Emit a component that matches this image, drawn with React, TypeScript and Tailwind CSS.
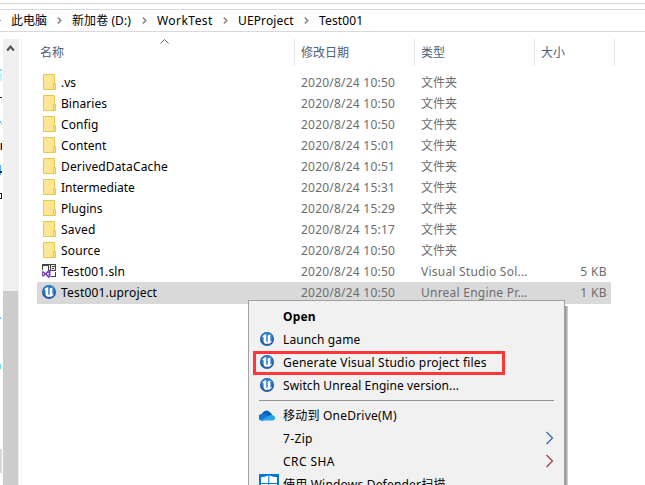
import React from "react";

const UnrealIcon = ({ className = "" }: { className?: string }) => (
  <svg width="14" height="14" viewBox="0 0 14 14" className={`${className} block shrink-0`}>
    <circle cx="7" cy="7" r="7" fill="#245ca6" />
    <circle cx="7" cy="5.800" r="5.700" fill="#2f7fca" />
    <path d="M2 5C2.800 3.600 4.200 2.600 6.200 2.300v6.500c0 1.200.9 1.300 1.500.8V4.300L7 3.700C8.600 3.400 9.600 3 10.800 2.300L10.300 3.500V8.700c0 .9.8.9 1.700.1-.5 1.800-2 2.800-3.300 3.100L7.900 11.200l-1 .9C5 12 3.500 10.900 3.600 9.300V5.300C3.400 4.500 2.700 4.500 2 5z" fill="#fff" />
  </svg>
);

const FolderIcon = () => (
  <svg width="13" height="16" viewBox="0 0 13 16" className="-mt-px ml-px block shrink-0">
    <path d="M.5.5h11v15H.5z" fill="#ffe694" stroke="#e9c84c" />
    <path d="M10.500 15.500v-6h2v6z" fill="#ffe18a" stroke="#e9c84c" />
  </svg>
);

const SolutionIcon = () => (
  <svg width="14" height="14" viewBox="0 0 14 14" className="-mt-px block shrink-0">
    <path d="M0 0h6v2H0zM0 2h1v4H0zM9 12h5v1H9zM13 8h1v5h-1z" fill="#424242" shapeRendering="crispEdges" />
    <path d="M6 0h8v7H6z" fill="#424242" shapeRendering="crispEdges" />
    <path d="M7 1h1v5H7zM9 1h1v5H9zM10 1h3v1h-3zM10 3h3v1h-3zM10 5h3v1h-3zM12 3h1v3h-1z" fill="#e8e8e8" shapeRendering="crispEdges" />
    <path d="M0 7.500l1-.5 2.500 2L6.500 5.800 8.500 6.500v6.500l-2 1L3.500 11 1 12.700 0 12.200zM1.200 9v2l1.200-1zM6.600 8.500L4.800 10l1.800 1.500z" fill="#7b45b5" fillRule="evenodd" />
  </svg>
);

const CloudIcon = () => (
  <svg width="16" height="11" viewBox="0 0 16 11" className="-mt-px block shrink-0">
    <path d="M3 10.500A3.200 3.200 0 0 1 2.800 4 4.700 4.700 0 0 1 11 2.300 4 4 0 0 1 13 5l-9 5.500z" fill="#0863b8" />
    <path d="M3.200 4.100C4.800 3.300 6 4 7 4.700l5 3.300-8 2.500H3A3.200 3.200 0 0 1 3.200 4.100z" fill="#1478d0" />
    <path d="M2 10l8-4.300c3-1.500 6-.1 6 2.300 0 1.500-1.200 2.500-2.500 2.500H3.300z" fill="#28a4ea" />
  </svg>
);

const DefenderIcon = () => (
  <svg width="20" height="20" viewBox="0 0 20 20" className="-mt-px block shrink-0">
    <path d="M0 0h20v20H0z" fill="#0078d7" />
    <path d="M2 3.200Q6 3 9.300 1.500V9H2zM10.300 1.500Q14 3 18 3.200V9h-7.700zM2 10h7.300v9H5Q2 16 2 10zM10.300 10H18q0 6-3 9h-4.700z" fill="#fff" />
  </svg>
);

const Crumb = ({ text, place }: { text: string; place: string }) => (
  <span className={`${place} ml-[10px] whitespace-nowrap`}>{text}</span>
);

const CrumbArrow = () => (
  <svg width="5" height="7" viewBox="0 0 5 7" className="block shrink-0">
    <path d="M.8.500l3 3-3 3" fill="none" stroke="#858585" strokeWidth="1.500" />
  </svg>
);

type Row = { name: string; date: string; type: string; size?: string; track: string; icon: React.ReactNode };
const folder = (name: string, time: string, track: string): Row => ({
  name, date: `2020/8/24 ${time}`, type: "文件夹", track, icon: <FolderIcon />,
});
const rows: Row[] = [
  folder(".vs", "10:50", ""),
  folder("Binaries", "10:50", "tracking-[0.05px]"),
  folder("Config", "10:50", "tracking-[0.1px]"),
  folder("Content", "15:01", "tracking-[0.05px]"),
  folder("DerivedDataCache", "10:51", "tracking-[0.14px]"),
  folder("Intermediate", "15:31", ""),
  folder("Plugins", "15:29", ""),
  folder("Saved", "15:17", "tracking-[0.2px]"),
  folder("Source", "10:50", "tracking-[0.15px]"),
  { name: "Test001.sln", date: "2020/8/24 10:50", type: "Visual Studio Sol...", size: "5 KB", track: "tracking-[0.12px]", icon: <SolutionIcon /> },
  { name: "Test001.uproject", date: "2020/8/24 10:50", type: "Unreal Engine Pr...", size: "1 KB", track: "tracking-[0.18px]", icon: <UnrealIcon className="-mt-0.5" /> },
];

const MenuRow = ({ icon, text, track = "", bold, arrow }: { icon?: React.ReactNode; text: string; track?: string; bold?: boolean; arrow?: string }) => (
  <div className="flex h-[23px] shrink-0 items-center pr-[10px]">
    <div className="flex w-[34px] shrink-0 items-center pl-[10px]">{icon}</div>
    <span className={`grow whitespace-nowrap ${track} ${bold ? "font-bold" : ""}`}>{text}</span>
    {arrow && (
      <svg width="9" height="14" viewBox="0 0 9 14" className="-mt-0.5 block">
        <path d="M1.500 1l6 6-6 6" fill="none" stroke={arrow} strokeWidth="1.200" />
      </svg>
    )}
  </div>
);

export default function App() {
  return (
    <div className="relative flex h-[485px] w-[645px] flex-col overflow-hidden bg-white font-['Noto_Sans','Noto_Sans_CJK_SC',sans-serif] text-[12px] leading-[21px] text-black">
      <div className="h-[4px] shrink-0 border-b border-[#d9d9d9]" />
      <div className="mt-[5px] flex h-[23px] shrink-0 items-center border-y border-[#d9d9d9]">
        <div className="h-px w-px bg-[#999]" />
        <Crumb text="此电脑" place="w-[46px]" />
        <CrumbArrow />
        <Crumb text="新加卷 (D:)" place="w-[70px] tracking-[0.08px]" />
        <CrumbArrow />
        <Crumb text="WorkTest" place="w-[66px] tracking-[0.45px]" />
        <CrumbArrow />
        <Crumb text="UEProject" place="w-[66px] tracking-[0.12px]" />
        <CrumbArrow />
        <Crumb text="Test001" place="tracking-[0.15px]" />
      </div>
      <div className="flex min-h-0 grow">
        <div className="flex w-[3px] shrink-0 flex-col">
          <div className="mt-[37px] h-[2px] w-[2px] bg-[#8ed8f8]" />
          <div className="mt-[2px] h-[8px] w-[2px] bg-[#b8f8fb]" />
          <div className="mt-[16px] h-px w-[2px] bg-[#402020]" />
          <div className="ml-px h-[5px] w-px bg-[#fff0b0]" />
          <div className="mt-[18px] h-[2px] w-px bg-[#70b8e8]" />
          <div className="ml-px h-[2px] w-px bg-[#f0c080]" />
          <div className="mt-[18px] flex h-[7px] w-[2px]">
            <div className="w-px bg-[#e0a860]" />
            <div className="w-px bg-[#222233]" />
          </div>
          <div className="mt-[15px] h-[6px] w-px bg-[#5aaeff]" />
          <div className="h-[2px] w-[2px] bg-[#103060]" />
          <div className="h-[2px] w-px bg-[#5aaeff]" />
          <div className="mt-[18px] h-[6px] w-[2px] border border-l-0 border-[#222]" />
          <div className="mt-[118px] h-[2px] w-px bg-[#6ccbed]" />
          <div className="mt-[45px] h-[5px] w-px bg-[#72d6fa]" />
          <div className="mt-[80px] h-[24px] w-[2px] bg-[#d8d8d8]" />
        </div>
        <div className="mt-[7px] flex w-[16px] shrink-0 flex-col items-start bg-[#f0f0f0]">
          <svg width="15" height="18" viewBox="0 0 15 18" className="block">
            <path d="M4.200 11.500l3.300-4 3.300 4" fill="none" stroke="#505050" strokeWidth="2" />
          </svg>
          <div className="mt-[234px] w-[15px] grow bg-[#cdcdcd]" />
        </div>
        <div className="mt-[7px] ml-[2px] w-px shrink-0 bg-[#f3f3f3]" />
        <div className="flex min-w-0 grow flex-col">
          <div className="mt-[7px] flex h-[27px] shrink-0 items-center text-[#4c607a]">
            <div className="flex h-full w-[273px] items-center border-r border-[#e5e5e5] pl-[18px]">
              <span>名称</span>
              <svg width="9" height="5" viewBox="0 0 9 5" className="mb-[22px] ml-[96px] block">
                <path d="M.5 4.500l4-4 4 4" fill="none" stroke="#666" />
              </svg>
            </div>
            <div className="flex h-full w-[120px] items-center border-r border-[#e5e5e5] pl-[6px]">修改日期</div>
            <div className="flex h-full w-[120px] items-center border-r border-[#e5e5e5] pl-[6px]">类型</div>
            <div className="flex h-full w-[80px] items-center border-r border-[#e5e5e5] pl-[6px]">大小</div>
          </div>
          <div className="mt-[6px] ml-[15px] flex w-[574px] flex-col">
            {rows.map((r, i) => (
              <div key={r.name} className={`flex shrink-0 items-center ${i === 10 ? "h-[22px] bg-[#d9d9d9]" : "h-[21px]"}`}>
                <div className="flex w-[24px] shrink-0 items-center pl-[5px]">{r.icon}</div>
                <span className={`w-[240px] shrink-0 whitespace-nowrap ${i === 10 ? "-mt-px" : ""} ${r.track}`}>{r.name}</span>
                <span className={`w-[120px] shrink-0 whitespace-nowrap tracking-[0.22px] text-[#6d6d6d] ${i === 10 ? "-mt-px" : ""}`}>{r.date}</span>
                <span className={`w-[120px] shrink-0 whitespace-nowrap text-[#6d6d6d] ${i > 8 ? "tracking-[0.23px]" : ""} ${i === 10 ? "-mt-px" : ""}`}>{r.type}</span>
                <span className={`grow pr-[4px] text-right whitespace-nowrap tracking-[0.4px] text-[#6d6d6d] ${i === 10 ? "-mt-px" : ""}`}>{r.size}</span>
              </div>
            ))}
          </div>
        </div>
      </div>

      <div className="absolute top-[300px] left-[248px] flex h-[200px] w-[317px] flex-col border border-[#a0a0a0] bg-[#f1f1f1] pt-[4px]">
        <MenuRow text="Open" bold track="tracking-[0.2px]" />
        <MenuRow text="Launch game" track="tracking-[0.1px]" icon={<UnrealIcon className="-mt-px ml-px" />} />
        <MenuRow text="Generate Visual Studio project files" track="tracking-[0.21px]" icon={<UnrealIcon className="-mt-px ml-px" />} />
        <MenuRow text="Switch Unreal Engine version..." track="tracking-[0.09px]" icon={<UnrealIcon className="-mt-px ml-px" />} />
        <div className="mt-[3px] mr-[10px] mb-[3px] ml-[10px] h-px shrink-0 bg-[#919191]" />
        <MenuRow text="移动到 OneDrive(M)" track="tracking-[0.22px]" icon={<CloudIcon />} />
        <MenuRow text="7-Zip" track="tracking-[0.35px]" arrow="#2b68b0" />
        <MenuRow text="CRC SHA" track="tracking-[0.43px]" arrow="#a03848" />
        <MenuRow text="使用 Windows Defender扫描" track="tracking-[0.2px]" icon={<DefenderIcon />} />
      </div>
      <div className="absolute top-[306px] left-[565px] h-[179px] w-[3px] bg-linear-to-r from-[#8c8c8c] to-[#d8d8d8]" />
      <div className="absolute top-[351px] left-[253px] h-[24px] w-[252px] border-3 border-[#fd3636]" />
    </div>
  );
}
